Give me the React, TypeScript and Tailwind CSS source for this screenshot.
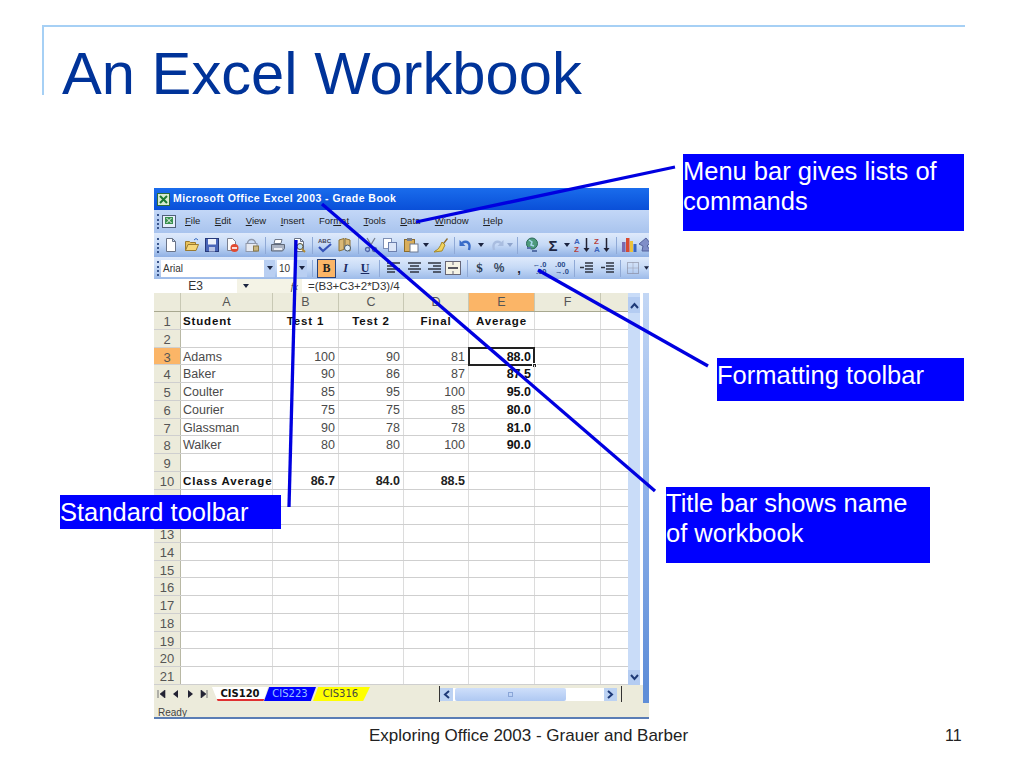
import React from "react";

type Row = [string, string, string, string, string, string, boolean?];
const rows: Row[] = [
  ["1", "Student", "Test 1", "Test 2", "Final", "Average", true],
  ["2", "", "", "", "", ""],
  ["3", "Adams", "100", "90", "81", "88.0"],
  ["4", "Baker", "90", "86", "87", "87.5"],
  ["5", "Coulter", "85", "95", "100", "95.0"],
  ["6", "Courier", "75", "75", "85", "80.0"],
  ["7", "Glassman", "90", "78", "78", "81.0"],
  ["8", "Walker", "80", "80", "100", "90.0"],
  ["9", "", "", "", "", ""],
  ["10", "Class Average", "86.7", "84.0", "88.5", "", true],
  ...Array.from({ length: 11 }, (_, i): Row => [String(i + 11), "", "", "", "", ""]),
];

function Slot({ w, children }: { w: number; children?: React.ReactNode }) {
  return (
    <div style={{ width: w }} className="shrink-0 flex items-center justify-center">
      {children}
    </div>
  );
}
function Sep({ w = 6 }: { w?: number }) {
  return (
    <Slot w={w}>
      <div className="w-px h-[17px] bg-[#8fa9d6]" />
    </Slot>
  );
}
const Grip = () => (
  <div className="w-[7px] shrink-0 flex justify-center">
    <div className="h-[15px] border-l-2 border-dotted border-[#39558c]" />
  </div>
);
const Arrow = ({ pale }: { pale?: boolean }) => (
  <svg width="6" height="4" viewBox="0 0 6 4">
    <path d="M0 0h6L3 4z" fill={pale ? "#8ea4cc" : "#1b2440"} />
  </svg>
);
function Ic({ children }: { children: React.ReactNode }) {
  return (
    <svg width="16" height="16" viewBox="0 0 16 16" className="shrink-0">
      {children}
    </svg>
  );
}

const DocShape = ({ fill = "#fff" }: { fill?: string }) => (
  <path d="M3.500 1.500h6l3 3v10h-9z M9.500 1.500v3h3" fill={fill} stroke="#6a7488" strokeWidth="1" />
);

const New = () => <Ic><DocShape /></Ic>;
const Open = () => (
  <Ic>
    <path d="M1.500 13.500v-9h4l1 1h5v2" fill="#e9c25a" stroke="#9a7a30" />
    <path d="M1.500 13.500l2.500-6h10.500l-2.500 6z" fill="#f6d779" stroke="#9a7a30" />
    <path d="M10 3l2-1.500 2 1.500" fill="none" stroke="#3468c0" />
  </Ic>
);
const Save = () => (
  <Ic>
    <rect x="1.500" y="1.500" width="13" height="13" fill="#4a66b8" stroke="#27397a" />
    <rect x="4" y="2" width="8" height="5.500" fill="#eef2fb" />
    <rect x="5" y="10" width="6" height="4.500" fill="#b8c4e6" />
  </Ic>
);
const Perm = () => (
  <Ic>
    <path d="M3.500 1.500h5l3 3v9h-8z" fill="#fbfbfb" stroke="#7a8090" />
    <circle cx="10.500" cy="11" r="4" fill="#e04a30" />
    <rect x="8" y="10.200" width="5" height="1.600" fill="#fff" />
  </Ic>
);
const Mail = () => (
  <Ic>
    <path d="M3.500 6.500a4 4 0 0 1 8 0" fill="none" stroke="#8f98aa" strokeWidth="1.500" />
    <rect x="2" y="6.500" width="11" height="8" fill="#e6e9f0" stroke="#8f98aa" />
    <rect x="9.500" y="9" width="5" height="5" fill="#c9b680" stroke="#8a7a4a" />
  </Ic>
);
const Print = () => (
  <Ic>
    <path d="M5 2.500h7l-1 4H4z" fill="#fff" stroke="#707a8c" />
    <path d="M1.500 7.500h13v4l-2 2.500h-11z" fill="#aab2c2" stroke="#5f6878" />
    <rect x="4" y="11" width="8" height="2" fill="#eceef3" />
  </Ic>
);
const Preview = () => (
  <Ic>
    <DocShape />
    <circle cx="9" cy="9.500" r="3" fill="#bfe0f5" stroke="#5b4f2f" />
    <path d="M11 12l3 3" stroke="#b08a30" strokeWidth="2" />
  </Ic>
);
const Spell = () => (
  <Ic>
    <text x="1" y="6" fontSize="6" fontWeight="700" fill="#445" fontFamily="Liberation Sans">ABC</text>
    <path d="M2 10l4 4 8-7" fill="none" stroke="#3452b8" strokeWidth="2.200" />
  </Ic>
);
const Research = () => (
  <Ic>
    <path d="M2 3l5-1.500v11L2 14zM8 1.500l5 1.500v11l-5-1.500z" fill="#d9b876" stroke="#8d7336" />
    <circle cx="10.500" cy="11" r="3" fill="#dfeefa" stroke="#456" />
  </Ic>
);
const Cut = () => (
  <Ic>
    <path d="M4 1l6 10M12 1L6 11" stroke="#7a8090" strokeWidth="1.300" />
    <circle cx="4.500" cy="12.500" r="2" fill="none" stroke="#5066a8" strokeWidth="1.300" />
    <circle cx="11.500" cy="12.500" r="2" fill="none" stroke="#5066a8" strokeWidth="1.300" />
  </Ic>
);
const Copy = () => (
  <Ic>
    <rect x="1.500" y="1.500" width="8" height="10" fill="#fff" stroke="#7e8fb4" />
    <rect x="6.500" y="5.500" width="8" height="9" fill="#dce6f8" stroke="#6d80ad" />
  </Ic>
);
const Paste = () => (
  <Ic>
    <rect x="1.500" y="2.500" width="10" height="12" fill="#d9ae5c" stroke="#8d6c28" />
    <rect x="4" y="1" width="5" height="3" fill="#777f90" />
    <rect x="7" y="7" width="8" height="8" fill="#fff" stroke="#6f7a92" />
  </Ic>
);
const Brush = () => (
  <Ic>
    <path d="M10 6l4-5 1 1-4 5z" fill="#8f6a2a" />
    <path d="M9 5l3 3-3 6-8 1 1-1c3-1 5-4 7-9z" fill="#f1d25c" stroke="#a68a2a" />
  </Ic>
);
const Undo = ({ c }: { c: string }) => (
  <Ic>
    <path d="M4 6c5-3 9 0 7 7" fill="none" stroke={c} strokeWidth="2.400" />
    <path d="M1.500 3v6h6z" fill={c} />
  </Ic>
);
const Link = () => (
  <Ic>
    <circle cx="8" cy="6.500" r="5.500" fill="#4d9a7c" stroke="#2c6a58" />
    <path d="M5 3l3 2-1 3 3 1" fill="none" stroke="#a8d8ec" strokeWidth="1.500" />
    <path d="M3 11h4M8 14h5" stroke="#5670a8" strokeWidth="2" />
  </Ic>
);
const Sort = ({ top, bot }: { top: string; bot: string }) => (
  <svg width="18" height="16" viewBox="0 0 18 16" className="shrink-0">
    <text x="0" y="7" fontSize="8" fontWeight="700" fill={top === "A" ? "#3a62b8" : "#b8403a"} fontFamily="Liberation Sans">{top}</text>
    <text x="0" y="15" fontSize="8" fontWeight="700" fill={bot === "A" ? "#3a62b8" : "#b8403a"} fontFamily="Liberation Sans">{bot}</text>
    <path d="M12.500 1v12" stroke="#223" strokeWidth="1.500" />
    <path d="M9.500 11h6l-3 4z" fill="#223" />
  </svg>
);
const Chart = () => (
  <Ic>
    <rect x="1" y="5" width="3.500" height="10" fill="#7a6bb0" />
    <rect x="5" y="1" width="3.500" height="14" fill="#d84a30" />
    <rect x="9" y="4" width="3" height="11" fill="#ecc23a" />
    <rect x="12.500" y="7" width="3" height="8" fill="#3a66c0" />
  </Ic>
);
const Draw = () => (
  <Ic>
    <path d="M9 1l4 5-3 3 4 5H5l1-5-4-2z" fill="#7f8ec8" stroke="#55639c" />
  </Ic>
);
const Lines = ({ d }: { d: string }) => (
  <svg width="15" height="14" viewBox="0 0 15 14">
    <path d={d} stroke="#2f3440" strokeWidth="1.500" fill="none" />
  </svg>
);
const Chevron = ({ d }: { d: string }) => (
  <svg width="9" height="7" viewBox="0 0 9 7">
    <path d={d} fill="none" stroke="#1e3a78" strokeWidth="2" />
  </svg>
);

function Menu({ t, u }: { t: string; u: number }) {
  return (
    <span className="whitespace-pre">
      {t.slice(0, u)}
      <span className="underline">{t[u]}</span>
      {t.slice(u + 1)}
    </span>
  );
}

const FONT = "font-['Liberation_Sans',Arial,sans-serif]";
const callout = "absolute bg-[#0000ff] text-white text-[25.5px] leading-[30px]";

export default function App() {
  return (
    <div className={`relative w-[1024px] h-[768px] bg-white overflow-hidden ${FONT}`}>
      <div className="absolute left-[42px] top-[25px] w-[923px] h-[70px] border-l-[2px] border-t-[2px] border-[#a6d0f5]" />
      <h1 className="absolute left-[62px] top-[39px] text-[59.7px] leading-[70px] text-[#003399]">An Excel Workbook</h1>

      {/* Excel window */}
      <div className="absolute left-[154px] top-[188px] w-[495px] h-[531px] flex flex-col text-[#222] border-b-2 border-[#5a7db5] overflow-hidden">
        <div className="h-[22px] bg-gradient-to-b from-[#1a6cec] to-[#0a4fd8] flex items-center pl-[3px] gap-[3px] text-white text-[10.5px] font-bold shrink-0">
          <svg width="13" height="13" viewBox="0 0 13 13">
            <rect x="0.5" y="0.5" width="12" height="12" fill="#d8ecd0" stroke="#2f6b3a" />
            <path d="M3 3l7 7M10 3l-7 7" stroke="#1d7a33" strokeWidth="2" />
          </svg>
          <span className="tracking-[0.45px]">Microsoft Office Excel 2003 - Grade Book</span>
        </div>

        <div className="h-[23px] bg-gradient-to-b from-[#c3d7f7] to-[#a9c4ee] flex items-center text-[9.5px] shrink-0">
          <Grip />
          <svg width="17" height="15" viewBox="0 0 17 15" className="shrink-0">
            <rect x="1.500" y="1.500" width="13" height="12" fill="#e6eefb" stroke="#50607a" />
            <rect x="4" y="3" width="8" height="7" fill="#3b9150" />
            <path d="M5.500 4l5 5M10.500 4l-5 5" stroke="#fff" />
          </svg>
          <div className="flex gap-[14.5px] ml-[7px]">
            <Menu t="File" u={0} />
            <Menu t="Edit" u={0} />
            <Menu t="View" u={0} />
            <Menu t="Insert" u={0} />
            <Menu t="Format" u={3} />
            <Menu t="Tools" u={0} />
            <Menu t="Data" u={0} />
            <Menu t="Window" u={0} />
            <Menu t="Help" u={0} />
          </div>
        </div>

        <div className="h-[24px] bg-gradient-to-b from-[#dfeafb] via-[#c5d9f6] to-[#8fb0e4] flex items-center overflow-hidden shrink-0">
          <Grip />
          <Slot w={20}><New /></Slot>
          <Slot w={21}><Open /></Slot>
          <Slot w={20}><Save /></Slot>
          <Slot w={20}><Perm /></Slot>
          <Slot w={20}><Mail /></Slot>
          <Sep />
          <Slot w={20}><Print /></Slot>
          <Slot w={21}><Preview /></Slot>
          <Sep />
          <Slot w={20}><Spell /></Slot>
          <Slot w={20}><Research /></Slot>
          <Sep />
          <Slot w={19}><Cut /></Slot>
          <Slot w={20}><Copy /></Slot>
          <Slot w={21}><Paste /></Slot>
          <Slot w={9}><Arrow /></Slot>
          <Slot w={21}><Brush /></Slot>
          <Sep />
          <Slot w={18}><Undo c="#3a6cc8" /></Slot>
          <Slot w={12}><Arrow /></Slot>
          <Slot w={19}><div className="-scale-x-100"><Undo c="#a9bde0" /></div></Slot>
          <Slot w={8}><Arrow pale /></Slot>
          <Sep />
          <Slot w={24}><Link /></Slot>
          <Slot w={18}><span className="text-[15px] font-bold text-[#1d2540] leading-none">Σ</span></Slot>
          <Slot w={10}><Arrow /></Slot>
          <Slot w={22}><Sort top="A" bot="Z" /></Slot>
          <Slot w={18}><Sort top="Z" bot="A" /></Slot>
          <Sep w={8} />
          <Slot w={18}><Chart /></Slot>
          <Slot w={13}><Draw /></Slot>
        </div>

        <div className="h-[22px] bg-gradient-to-b from-[#dfeafb] via-[#c5d9f6] to-[#9dbbe9] flex items-center overflow-hidden shrink-0">
          <Grip />
          <div className="w-[114px] h-[17px] shrink-0 bg-white flex items-center justify-between pl-[2px] text-[10px] text-[#333]">
            Arial
            <div className="w-[11px] h-full bg-[#b9cff2] flex items-center justify-center"><Arrow /></div>
          </div>
          <div className="w-[30px] h-[17px] shrink-0 ml-[2px] bg-white flex items-center justify-between pl-[2px] text-[10px] text-[#333]">
            10
            <div className="w-[11px] h-full bg-[#b9cff2] flex items-center justify-center"><Arrow /></div>
          </div>
          <Sep w={10} />
          <div className="w-[19px] h-[19px] shrink-0 bg-[#fbb567] border border-[#26417a] flex items-center justify-center font-['Liberation_Serif',serif] font-bold text-[12px]">B</div>
          <Slot w={19}><span className="font-['Liberation_Serif',serif] font-bold italic text-[12px] text-[#1a2a60]">I</span></Slot>
          <Slot w={20}><span className="font-['Liberation_Serif',serif] font-bold underline text-[12px] text-[#1a2a60]">U</span></Slot>
          <Sep w={8} />
          <Slot w={21}><Lines d="M1 2h13M1 5h8M1 8h13M1 11h8" /></Slot>
          <Slot w={21}><Lines d="M1 2h13M3 5h9M1 8h13M3 11h9" /></Slot>
          <Slot w={18}><Lines d="M1 2h13M6 5h8M1 8h13M6 11h8" /></Slot>
          <Slot w={20}>
            <svg width="16" height="14" viewBox="0 0 16 14">
              <rect x="0.500" y="0.500" width="15" height="13" fill="#f4f2e4" stroke="#667" />
              <path d="M3 7h10" stroke="#223" strokeWidth="1.500" />
              <path d="M8 1v3M8 10v3" stroke="#667" />
            </svg>
          </Slot>
          <Sep w={8} />
          <Slot w={17}><span className="text-[13px] font-bold font-['Liberation_Serif',serif] text-[#2a3a50]">$</span></Slot>
          <Slot w={22}><span className="text-[12px] font-bold text-[#3a4a60]">%</span></Slot>
          <Slot w={18}><span className="text-[13px] font-bold text-[#1d2535] leading-none">,</span></Slot>
          <Slot w={23}><span className="text-[7.5px] leading-[7px] font-bold text-[#2a4a8a] text-right">←.0<br />.00</span></Slot>
          <Slot w={22}><span className="text-[7.5px] leading-[7px] font-bold text-[#2a4a8a]">.00<br />→.0</span></Slot>
          <Sep w={3} />
          <Slot w={21}><Lines d="M6 2h8M6 5h8M6 8h8M6 11h8M1 6.500h4" /></Slot>
          <Slot w={21}><Lines d="M6 2h8M6 5h8M6 8h8M6 11h8M5 6.500H1" /></Slot>
          <Sep w={4} />
          <Slot w={22}>
            <svg width="14" height="14" viewBox="0 0 14 14">
              <rect x="1.500" y="1.500" width="11" height="11" fill="none" stroke="#778" strokeDasharray="1 1" />
              <path d="M7 1.500v11M1.500 7h11" stroke="#99a" strokeDasharray="1 1" />
            </svg>
          </Slot>
          <Slot w={5}><Arrow /></Slot>
        </div>

        <div className="h-[14px] bg-white flex items-center shrink-0">
          <div className="w-[83px] h-full bg-white flex items-center justify-center text-[12px] leading-none text-[#333]">E3</div>
          <div className="w-[17px] h-full bg-[#f4f3e6] flex items-center justify-center"><Arrow /></div>
          <div className="w-[48px] h-full bg-[#f4f3e6] flex items-center justify-end pr-[4px] italic font-['Liberation_Serif',serif] text-[10px] text-[#444]">fx</div>
          <div className="flex-1 h-full bg-white pl-[6px] text-[11.5px] leading-[14px] text-[#333] whitespace-nowrap">=(B3+C3+2*D3)/4</div>
        </div>

        <div className="flex-1 min-h-0 flex bg-white">
          <div className="w-[474px] flex flex-col shrink-0">
            <div className="h-[19px] flex bg-[#ecebdb] text-[12.5px] text-[#555] border-b border-[#a8a890] shrink-0">
              <div className="w-[27px] border-r border-[#c8c8b4]" />
              {([["A", 92], ["B", 66], ["C", 65], ["D", 65], ["E", 66], ["F", 66], ["", 27]] as [string, number][]).map(([l, w]) => (
                <div
                  key={l}
                  style={{ width: w }}
                  className={`text-center leading-[18px] ${l ? "border-r border-[#c8c8b4]" : ""} ${l === "E" ? "bg-[#fbb567]" : ""}`}
                >
                  {l}
                </div>
              ))}
            </div>
            {rows.map((r) => {
              const bold = r[6];
              const head = "font-bold text-[11.5px] text-[#111] tracking-[0.85px]";
              return (
                <div key={r[0]} className="h-[17.76px] flex text-[12.5px] leading-[19px] text-[#4a4a4a] border-b border-[#cfcfcf]">
                  <div className={`w-[27px] shrink-0 text-center text-[13px] text-[#555] border-r border-[#b8b8a4] ${r[0] === "3" ? "bg-[#fbb567]" : "bg-[#ecebdb]"}`}>{r[0]}</div>
                  <div className={`w-[92px] shrink-0 pl-[2px] border-r border-[#dcdcdc] whitespace-nowrap ${bold ? head : ""}`}>{r[1]}</div>
                  {([[r[2], 66], [r[3], 65], [r[4], 65]] as [string, number][]).map(([v, w], i) => (
                    <div
                      key={i}
                      style={{ width: w }}
                      className={`shrink-0 px-[3px] border-r border-[#dcdcdc] whitespace-nowrap ${r[0] === "1" ? `text-center ${head}` : bold ? "text-right font-bold text-[#222]" : "text-right"}`}
                    >
                      {v}
                    </div>
                  ))}
                  <div className={`relative w-[66px] shrink-0 px-[3px] border-r border-[#dcdcdc] whitespace-nowrap ${r[0] === "1" ? `text-center ${head}` : "text-right font-bold text-[#111]"}`}>
                    {r[5]}
                    {r[0] === "3" && (
                      <>
                        <div className="absolute -left-px -top-px w-[67px] h-[19px] border-2 border-[#222]" />
                        <div className="absolute -right-[3px] top-[15px] w-[5px] h-[5px] bg-[#222] border border-white" />
                      </>
                    )}
                  </div>
                  <div className="w-[66px] shrink-0 border-r border-[#dcdcdc]" />
                </div>
              );
            })}
          </div>
          <div className="w-[12px] bg-[#c9dcf8] flex flex-col justify-between shrink-0">
            <div className="h-[16px] mt-[4px] bg-[#b4ccf2] flex items-center justify-center"><Chevron d="M1 6l3.500-4L8 6" /></div>
            <div className="h-[15px] bg-[#b4ccf2] flex items-center justify-center"><Chevron d="M1 1l3.500 4L8 1" /></div>
          </div>
          <div className="w-[3px] shrink-0" />
          <div className="w-[6px] shrink-0 bg-gradient-to-b from-[#c3d7f5] via-[#8fb2ea] to-[#5f8ed8]" />
        </div>

        <div className="h-[18px] flex items-center bg-[#ecebdb] shrink-0">
          <div className="w-[58px] shrink-0 flex text-[#223]">
            {["M1 0v8M8 0v8L3 4z", "M7 0v8L2 4z", "M2 0v8l5-4z", "M7 0v8M1 0v8l5-4z"].map((d, i) => (
              <div key={i} className="w-[14.5px] flex justify-center">
                <svg width="9" height="8" viewBox="0 0 9 8"><path d={d} fill="#223" stroke="#223" strokeWidth={i === 0 || i === 3 ? 0.6 : 0} /></svg>
              </div>
            ))}
          </div>
          <div className="h-[14px] w-[56px] shrink-0 text-center font-bold font-['DejaVu_Sans',sans-serif] text-[10px] leading-[13px] text-[#111] bg-white border-b-2 border-[#e03030] [clip-path:polygon(0_0,100%_0,92%_100%,10%_100%)]">CIS120</div>
          <div className="h-[14px] w-[52px] shrink-0 -ml-[4px] text-center font-['DejaVu_Sans',sans-serif] text-[10px] leading-[14px] text-[#9cc4ff] bg-[#0000ff] [clip-path:polygon(10%_0,100%_0,90%_100%,0_100%)]">CIS223</div>
          <div className="h-[14px] w-[57px] shrink-0 -ml-[3px] pl-[1px] pr-[3px] text-center font-['DejaVu_Sans',sans-serif] text-[10px] leading-[14px] text-[#444] bg-[#ffff00] [clip-path:polygon(9%_0,100%_0,88%_100%,0_100%)]">CIS316</div>
          <div className="w-[69px] shrink-0" />
          <div className="w-px h-[16px] bg-[#333] shrink-0" />
          <div className="w-[177px] h-[13px] shrink-0 flex items-center bg-white">
            <div className="w-[13px] h-full bg-[#bcd2f3] flex items-center justify-center"><div className="-rotate-90"><Chevron d="M1 6l3.500-4L8 6" /></div></div>
            <div className="w-[111px] h-full bg-gradient-to-b from-[#cfdffa] to-[#aec8f2] ml-[2px] rounded-[2px] flex items-center justify-center">
              <div className="w-[5px] h-[5px] border border-[#8aa6d8]" />
            </div>
            <div className="flex-1" />
            <div className="w-[13px] h-full bg-[#bcd2f3] flex items-center justify-center"><div className="rotate-90"><Chevron d="M1 6l3.500-4L8 6" /></div></div>
          </div>
          <div className="w-[4px] shrink-0" />
          <div className="w-px h-[16px] bg-[#333] shrink-0" />
          <div className="flex-1" />
          <div className="w-[6px] h-full shrink-0 bg-[#5f8ed8]" />
        </div>
        <div className="h-[14px] bg-[#ecebdb] text-[10px] pl-[4px] leading-[19px] text-[#444] shrink-0">Ready</div>
      </div>

      {/* Leader lines */}
      <svg className="absolute left-0 top-0" width="1024" height="768" fill="none" stroke="#0000e0" strokeWidth="3.300">
        <path d="M675 167L416 222" />
        <path d="M708 366L538 270" />
        <path d="M322 204L655 491" />
        <path d="M296 240L289 507" />
      </svg>

      {/* Callouts */}
      <div className={`${callout} left-[683px] top-[154px] w-[281px] h-[77px] pt-[2px]`}>Menu bar gives lists of<br />commands</div>
      <div className={`${callout} left-[717px] top-[358px] w-[247px] h-[43px] pt-[2px]`}>Formatting toolbar</div>
      <div className={`${callout} left-[666px] top-[487px] w-[264px] h-[76px] pt-[1px]`}>Title bar shows name<br />of workbook</div>
      <div className={`${callout} left-[60px] top-[495px] w-[221px] h-[34px] leading-[34px]`}>Standard toolbar</div>

      {/* Footer */}
      <div className="absolute left-[369px] top-[727px] text-[17px] leading-[18px] text-[#222] whitespace-nowrap">Exploring Office 2003 - Grauer and Barber</div>
      <div className="absolute left-[945px] top-[727px] text-[16px] leading-[18px] text-[#222]">11</div>
    </div>
  );
}
